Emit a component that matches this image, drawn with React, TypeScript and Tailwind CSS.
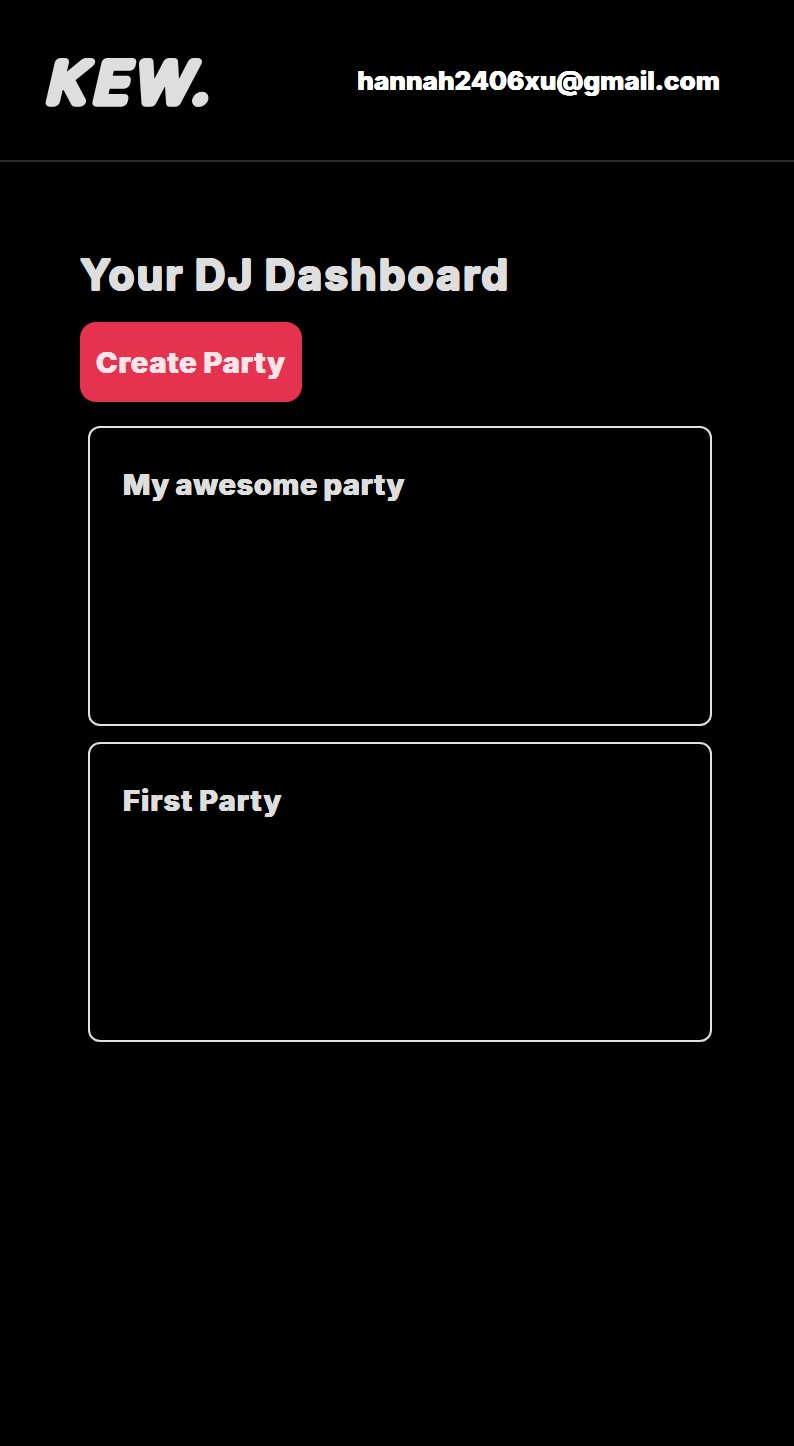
const rounded =
  "font-['Inter','Noto_Sans',sans-serif] font-bold whitespace-nowrap antialiased [text-shadow:0.026em_0_currentColor,0.018em_0.018em_currentColor,0_0.026em_currentColor,-0.018em_0.018em_currentColor,-0.026em_0_currentColor,-0.018em_-0.018em_currentColor,0_-0.026em_currentColor,0.018em_-0.018em_currentColor]";
const roundedSmall =
  "font-['Inter','Noto_Sans',sans-serif] font-extrabold whitespace-nowrap antialiased [text-shadow:0.4px_0_currentColor,-0.4px_0_currentColor,0_0.4px_currentColor,0_-0.4px_currentColor]";

function Logo() {
  return (
    <svg className="h-[60px] w-[172px] overflow-visible" viewBox="0 0 172 60" role="img" aria-label="KEW.">
      <g transform="translate(0 51.5) skewX(-13) scale(1.07 1)">
        <text
          className="fill-[#dedede] stroke-[#dedede] font-['Inter',sans-serif] text-[54px] font-light"
          strokeWidth="9.5"
          strokeLinejoin="round"
          strokeLinecap="round"
          x="5 48.5 87.5 141.5"
          y="0"
        >
          KEW.
        </text>
      </g>
    </svg>
  );
}

function Party({ name, spacing }: { name: string; spacing: string }) {
  return (
    <article className="h-[300px] rounded-xl border-2 border-[#e0e2e1] px-8 pt-8">
      <h2 className={`pl-px text-[29px] leading-[49px] [word-spacing:-1.5px] ${spacing} ${roundedSmall}`}>{name}</h2>
    </article>
  );
}

export default function App() {
  return (
    <div className="min-h-[1446px] bg-black text-[#dedede]">
      <header className="flex h-[162px] items-center justify-between border-b-2 border-[#2b2b2b] pr-[74px] pl-[40px]">
        <Logo />
        <span className={`pt-0.5 text-[26px] leading-none tracking-[0.1px] text-white ${roundedSmall}`}>hannah2406xu@gmail.com</span>
      </header>
      <main className="px-20 pt-20">
        <h1 className={`pt-px text-[42.5px] leading-[63px] tracking-[2.1px] [word-spacing:-2px] ${rounded}`}>Your DJ Dashboard</h1>
        <button className={`mt-4 h-20 w-[222px] rounded-2xl bg-[#e5324f] px-4 pt-px text-left text-[29px] tracking-[0.95px] [word-spacing:-1.5px] text-[#fce4e8] ${roundedSmall}`}>Create Party</button>
        <div className="mt-6 ml-2 flex w-[624px] flex-col gap-4">
          <Party name="My awesome party" spacing="tracking-[0.65px]" />
          <Party name="First Party" spacing="tracking-[1.05px]" />
        </div>
      </main>
    </div>
  );
}
